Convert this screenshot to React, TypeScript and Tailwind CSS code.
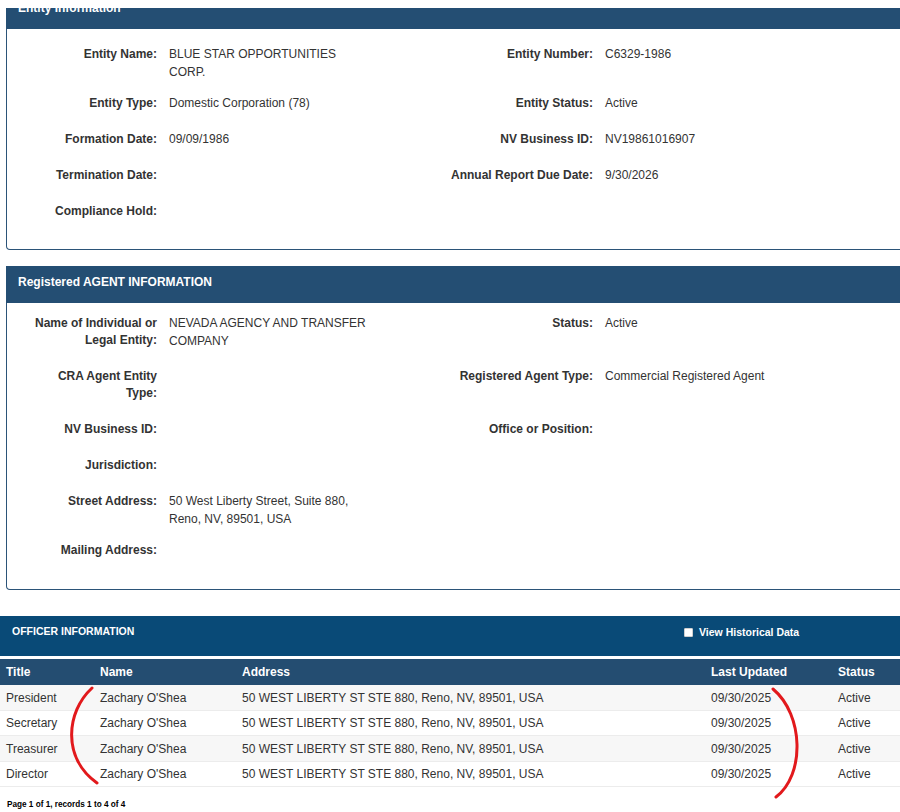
import React from "react";

interface Field {
  label: string;
  value?: string[];
}

interface FieldRow {
  left: Field;
  right?: Field;
}

const entityRows: FieldRow[] = [
  {
    left: { label: "Entity Name:", value: ["BLUE STAR OPPORTUNITIES CORP."] },
    right: { label: "Entity Number:", value: ["C6329-1986"] },
  },
  {
    left: { label: "Entity Type:", value: ["Domestic Corporation (78)"] },
    right: { label: "Entity Status:", value: ["Active"] },
  },
  {
    left: { label: "Formation Date:", value: ["09/09/1986"] },
    right: { label: "NV Business ID:", value: ["NV19861016907"] },
  },
  {
    left: { label: "Termination Date:" },
    right: { label: "Annual Report Due Date:", value: ["9/30/2026"] },
  },
  { left: { label: "Compliance Hold:" } },
];

const agentRows: FieldRow[] = [
  {
    left: { label: "Name of Individual or Legal Entity:", value: ["NEVADA AGENCY AND TRANSFER COMPANY"] },
    right: { label: "Status:", value: ["Active"] },
  },
  {
    left: { label: "CRA Agent Entity Type:" },
    right: { label: "Registered Agent Type:", value: ["Commercial Registered Agent"] },
  },
  {
    left: { label: "NV Business ID:" },
    right: { label: "Office or Position:" },
  },
  { left: { label: "Jurisdiction:" } },
  {
    left: {
      label: "Street Address:",
      value: ["50 West Liberty Street, Suite 880, Reno, NV, 89501, USA"],
    },
  },
  { left: { label: "Mailing Address:" } },
];

const officers = [
  { title: "President", name: "Zachary O'Shea" },
  { title: "Secretary", name: "Zachary O'Shea" },
  { title: "Treasurer", name: "Zachary O'Shea" },
  { title: "Director", name: "Zachary O'Shea" },
];

function FieldBlock({ rows }: { rows: FieldRow[] }) {
  return (
    <div>
      {rows.map((row, i) => (
        <div key={i} className="flex items-start mb-[13px]">
          {/* left pair */}
          <div className="flex items-start w-[436px] shrink-0">
            <div className="w-[150px] shrink-0 pl-[20px] pt-[1px] pb-[5px] text-right font-bold leading-[17px]">
              {row.left.label}
            </div>
            <div className="ml-[12px] w-[200px] leading-[18px]">{row.left.value}</div>
          </div>
          {/* right pair */}
          {row.right && (
            <div className="flex items-start flex-1">
              <div className="w-[150px] shrink-0 pt-[1px] pb-[5px] text-right font-bold leading-[17px]">
                {row.right.label}
              </div>
              <div className="ml-[12px] flex-1 leading-[18px]">{row.right.value}</div>
            </div>
          )}
        </div>
      ))}
    </div>
  );
}

export default function App() {
  return (
    <div
      className="relative w-[900px] h-[812px] overflow-hidden bg-white text-[12px] text-[#333333]"
      style={{ fontFamily: '"Liberation Sans", Arial, sans-serif' }}
    >
      <div className="flex flex-col pt-[8px]">
        {/* Entity Information */}
        <div className="ml-[6px] w-[920px]">
          <div className="flex items-start h-[21px] bg-[#244e73] pl-[12px] text-white font-bold leading-[15px]">
            <div className="-mt-[7px]">Entity Information</div>
          </div>
          <div className="border-x border-b border-[#2b5378] rounded-b-[4px] pt-[16px] pb-[11px]">
            <FieldBlock rows={entityRows} />
          </div>
        </div>

        {/* Registered Agent */}
        <div className="ml-[6px] mt-[16px] w-[920px]">
          <div className="h-[37px] bg-[#244e73] pl-[12px] pt-[9px] text-white font-bold leading-[15px]">
            Registered AGENT INFORMATION
          </div>
          <div className="border-x border-b border-[#2b5378] rounded-b-[4px] pt-[11px] pb-[12px]">
            <FieldBlock rows={agentRows} />
          </div>
        </div>

        {/* Officer Information */}
        <div className="mt-[26px]">
          <div className="h-[40px] bg-[#094a77] flex items-start text-white font-bold text-[10.5px] leading-[13px]">
            <div className="w-[684px] pl-[12px] pt-[9px]">OFFICER INFORMATION</div>
            <div className="flex items-center gap-[6px] pt-[10px]">
              <span className="w-[9px] h-[9px] bg-white border border-[#cfcfcf] rounded-[1px]" />
              <span>View Historical Data</span>
            </div>
          </div>
          <div className="h-[3px] bg-white" />
          <div className="flex h-[26px] items-center bg-[#244d71] text-white font-bold">
            <div className="w-[94px] pl-[6px]">Title</div>
            <div className="w-[142px] pl-[6px]">Name</div>
            <div className="w-[469px] pl-[6px]">Address</div>
            <div className="w-[127px] pl-[6px]">Last Updated</div>
            <div className="flex-1 pl-[6px]">Status</div>
          </div>
          {officers.map((o, i) => (
            <div
              key={o.title}
              className={`flex h-[25.5px] items-center pt-[1px] border-b border-[#ececec] ${
                i % 2 === 0 ? "bg-[#f7f7f7]" : "bg-white"
              }`}
            >
              <div className="w-[94px] pl-[6px]">{o.title}</div>
              <div className="w-[142px] pl-[6px]">{o.name}</div>
              <div className="w-[469px] pl-[6px]">50 WEST LIBERTY ST STE 880, Reno, NV, 89501, USA</div>
              <div className="w-[127px] pl-[6px]">09/30/2025</div>
              <div className="flex-1 pl-[6px]">Active</div>
            </div>
          ))}
          <div className="mt-[13px] pl-[7px] text-[8.2px] font-bold leading-[10px] text-black">
            Page 1 of 1, records 1 to 4 of 4
          </div>
        </div>
      </div>

      {/* red pen marks */}
      <svg
        className="absolute inset-0 pointer-events-none"
        width="900"
        height="812"
        viewBox="0 0 900 812"
        fill="none"
      >
        <path
          d="M 92 688 C 66 712, 62 758, 97 783"
          stroke="#e2191c"
          strokeWidth="3"
          strokeLinecap="round"
        />
        <path
          d="M 773 689 C 804 715, 805 775, 776 797"
          stroke="#e2191c"
          strokeWidth="3"
          strokeLinecap="round"
        />
      </svg>
    </div>
  );
}
